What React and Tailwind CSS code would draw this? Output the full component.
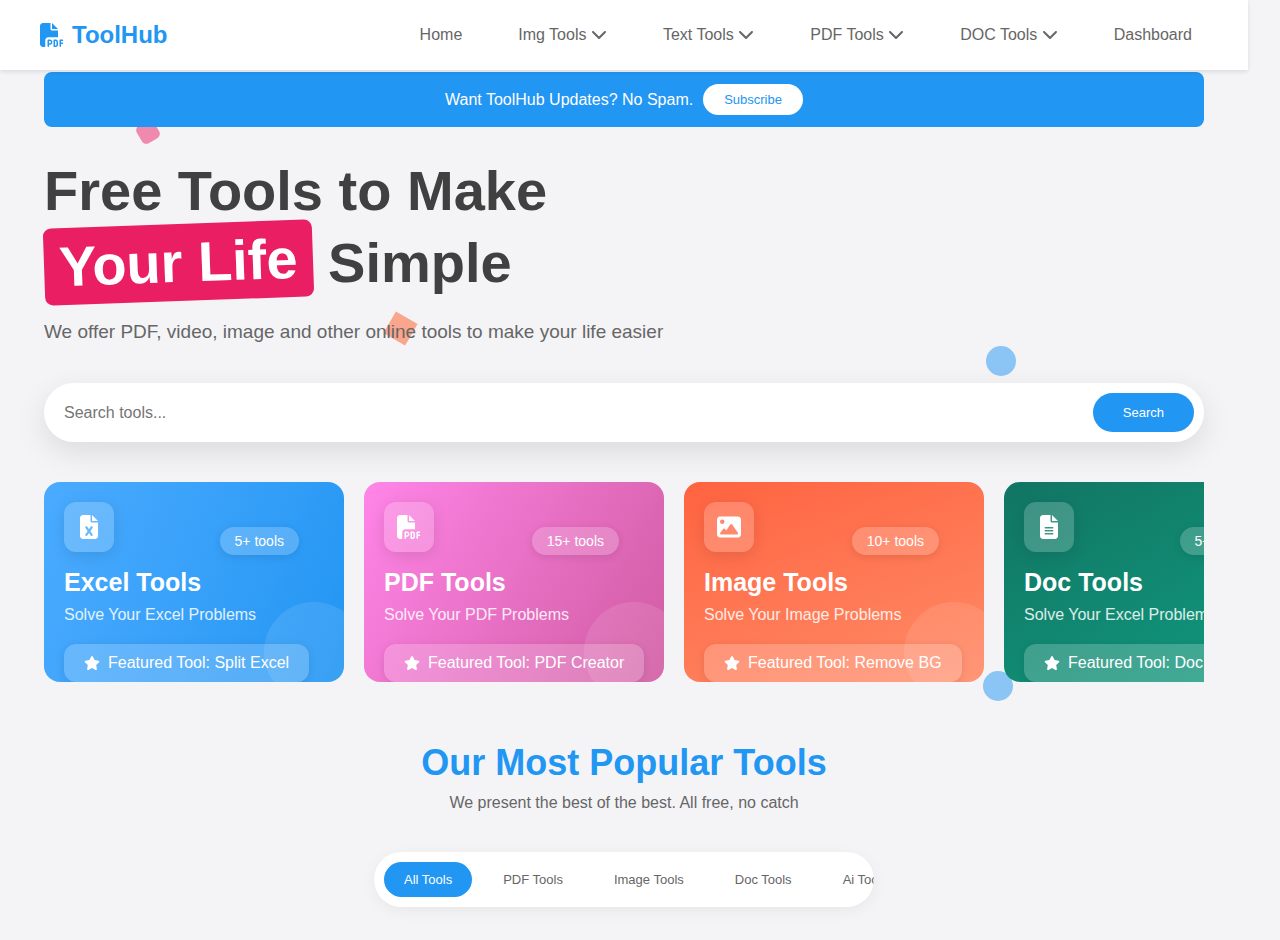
import { FaChevronDown, FaFileExcel, FaFileLines, FaFilePdf, FaImage, FaStar } from "react-icons/fa6";

const links = [
  { label: "Home" },
  { label: "Img Tools", menu: true },
  { label: "Text Tools", menu: true },
  { label: "PDF Tools", menu: true },
  { label: "DOC Tools", menu: true },
  { label: "Dashboard" },
];

const cards = [
  { title: "Excel Tools", text: "Solve Your Excel Problems", count: "5+ tools", featured: "Split Excel", Icon: FaFileExcel, bg: "bg-linear-110 from-[#4aabff] to-[#2196f3]" },
  { title: "PDF Tools", text: "Solve Your PDF Problems", count: "15+ tools", featured: "PDF Creator", Icon: FaFilePdf, bg: "bg-linear-120 from-[#ff85e8] to-[#d15ba2]" },
  { title: "Image Tools", text: "Solve Your Image Problems", count: "10+ tools", featured: "Remove BG", Icon: FaImage, bg: "bg-linear-160 from-[#ff6340] to-[#ff8a66]" },
  { title: "Doc Tools", text: "Solve Your Excel Problems", count: "5+ tools", featured: "Doc Creator", Icon: FaFileLines, bg: "bg-linear-150 from-[#117563] to-[#109c80]" },
];

const tabs = ["All Tools", "PDF Tools", "Image Tools", "Doc Tools", "Ai Tools"];

function Navbar() {
  return (
    <header className="relative z-20 flex h-[70px] items-center justify-between bg-white px-10 shadow-[0_2px_4px_rgba(0,0,0,0.1)]">
      <a href="#" className="flex items-center gap-2 text-2xl font-bold text-[#2196f3]">
        <FaFilePdf aria-hidden="true" />
        ToolHub
      </a>
      <nav className="flex gap-6">
        {links.map(({ label, menu }) => (
          <a key={label} href="#" className="px-4 text-base whitespace-nowrap text-[#666]">
            {label}
            {menu && (
              <>
                {" "}
                <FaChevronDown aria-hidden="true" className="inline align-[-2px]" />
              </>
            )}
          </a>
        ))}
      </nav>
    </header>
  );
}

function Shapes() {
  return (
    <div aria-hidden="true" className="pointer-events-none">
      <div className="absolute top-[122px] left-[138px] size-5 rotate-60 rounded-[5px] bg-[#e91e63] opacity-50" />
      <div className="absolute top-[316px] left-[388px] size-[25px] rotate-30 bg-[#ff5722] opacity-50" />
      <div className="absolute top-[346px] left-[986px] size-[30px] rounded-full bg-[#2196f3] opacity-50" />
      <div className="absolute top-[671px] left-[983px] size-[30px] rounded-full bg-[#2196f3] opacity-50" />
    </div>
  );
}

function ToolCard({ title, text, count, featured, Icon, bg }) {
  return (
    <article className={`relative h-[200px] w-[300px] shrink-0 overflow-hidden rounded-2xl p-5 text-white ${bg}`}>
      <div className="absolute -right-5 -bottom-5 size-[100px] rounded-full bg-white/10" />
      <div className="flex items-start justify-between pr-[25px]">
        <div className="flex size-[50px] items-center justify-center rounded-xl bg-white/20 text-2xl shadow-[0_4px_15px_rgba(0,0,0,0.1)]">
          <Icon aria-hidden="true" />
        </div>
        <span className="mt-[25px] rounded-full bg-white/20 px-[15px] py-1 text-sm shadow-[0_2px_8px_rgba(0,0,0,0.1)]">{count}</span>
      </div>
      <h2 className="mt-3 text-[25px] leading-[30px] font-bold">{title}</h2>
      <p className="mt-[6px] text-base leading-6 text-white/85">{text}</p>
      <div className="relative mt-[17px] inline-flex items-center gap-2 rounded-xl bg-white/20 px-5 py-[10px] text-base leading-[18px] whitespace-nowrap shadow-[0_2px_8px_rgba(0,0,0,0.1)]">
        <FaStar aria-hidden="true" />
        Featured Tool: {featured}
      </div>
    </article>
  );
}

export default function App() {
  return (
    <div className="min-h-screen overflow-hidden bg-[#f4f4f7] pr-8 font-['Liberation_Sans',Arial,sans-serif]">
      <div className="relative">
        <Navbar />
        <Shapes />
        <main className="relative px-11 pt-[2px] pb-8">
          <div className="flex items-center justify-center gap-[10px] rounded-lg bg-[#2196f3] py-3 text-base text-white">
            <span>Want ToolHub Updates? No Spam.</span>
            <button type="button" className="rounded-full bg-white px-[21px] py-2 text-[13px] leading-[15px] text-[#2196f3]">Subscribe</button>
          </div>

          <section className="pt-[30px]">
            <h1 className="text-[56px] leading-[67px] font-bold text-[#404040]">
              Free Tools to Make
              <br />
              <span className="inline-block -rotate-2 rounded-lg bg-[#e91e63] px-[15px] py-[5px] text-white">Your Life</span> Simple
            </h1>
            <p className="mt-[19px] text-[19px] leading-6 text-[#666]">We offer PDF, video, image and other online tools to make your life easier</p>
            <form role="search" onSubmit={(e) => e.preventDefault()} className="mt-[39px] flex rounded-full bg-white p-[10px] shadow-[0_10px_30px_rgba(0,0,0,0.1)]">
              <input type="search" aria-label="Search tools" placeholder="Search tools..." className="min-w-0 flex-1 px-[10px] text-base outline-none placeholder:text-[#757575]" />
              <button type="submit" className="rounded-full bg-[#2196f3] px-[30px] py-3 text-[13px] leading-[15px] text-white">Search</button>
            </form>
          </section>

          <section className="mt-10 flex gap-5 overflow-hidden">
            {cards.map((card) => (
              <ToolCard key={card.title} {...card} />
            ))}
          </section>

          <section className="mt-[60px] flex flex-col items-center">
            <h2 className="text-4xl leading-[41px] font-bold text-[#2196f3]">Our Most Popular Tools</h2>
            <p className="mt-2 text-base text-[#666]">We present the best of the best. All free, no catch</p>
            <div className="mt-[37px] flex w-[500px] max-w-full gap-[11px] overflow-hidden rounded-full bg-white p-[10px] shadow-[0_4px_15px_rgba(0,0,0,0.05)]">
              {tabs.map((tab, i) => (
                <button
                  key={tab}
                  type="button"
                  className={`shrink-0 rounded-full px-5 py-[10px] text-[13px] leading-[15px] ${i === 0 ? "bg-[#2196f3] text-white" : "text-[#666]"}`}
                >
                  {tab}
                </button>
              ))}
            </div>
          </section>
        </main>
      </div>
    </div>
  );
}
